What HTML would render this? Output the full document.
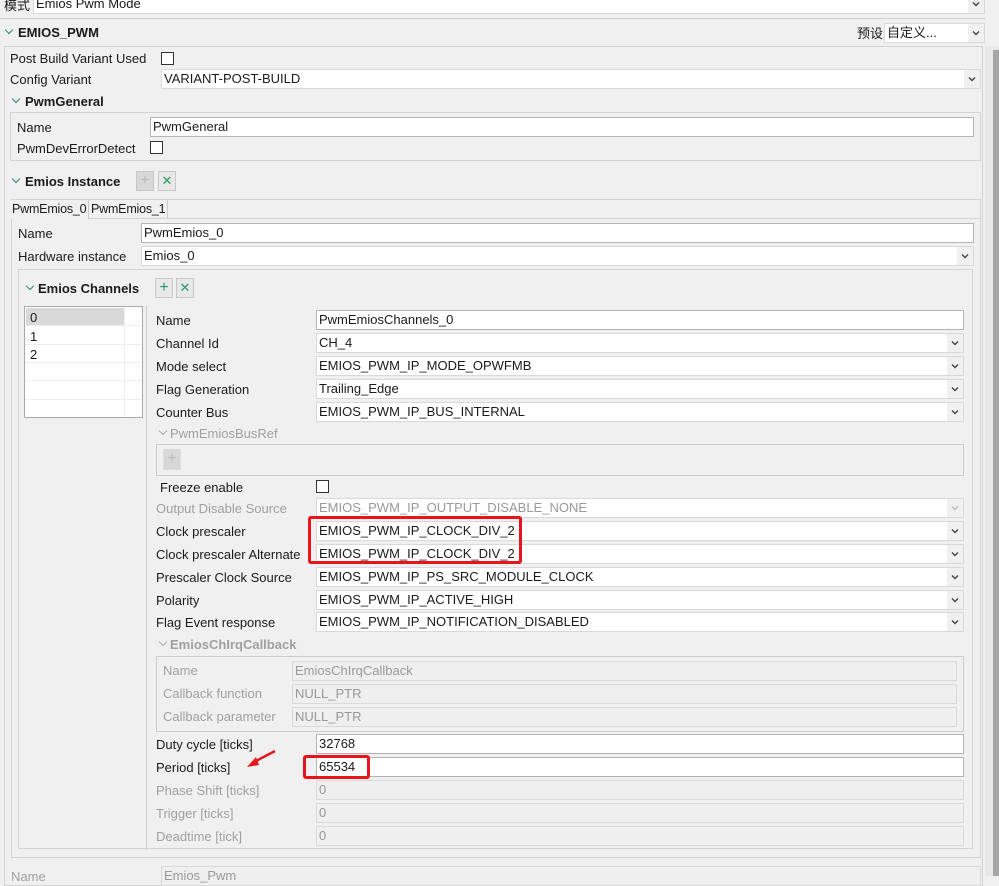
<!DOCTYPE html>
<html><head><meta charset="utf-8"><style>
*{box-sizing:border-box;margin:0;padding:0}
body{width:999px;height:876px;overflow:hidden;background:#f0f0f0;font-family:"Liberation Sans","Noto Sans CJK SC",sans-serif;font-size:13px;color:#1a1a1a;position:relative}
.a{position:absolute;white-space:nowrap}
.l{position:absolute;white-space:nowrap;line-height:16px;margin-top:1px}
.g{color:#a0a0a0}
.b{font-weight:bold}
.in{position:absolute;background:#fff;border:1px solid #b4b4b4;height:20px;line-height:18px;padding-left:2px;white-space:nowrap;overflow:hidden}
.dis{background:#efefef;border-color:#dadada;color:#999}
.cb{position:absolute;background:#fff;border:1px solid #d9d9d9;height:20px;line-height:18px;padding-left:2px;white-space:nowrap;overflow:hidden}
.cb:after{content:"";position:absolute;right:0;top:0;width:16px;height:18px;background:#f0f0f0}
.ar{position:absolute;right:4px;top:5px;width:8px;height:8px;z-index:2}
.chk{position:absolute;width:13px;height:13px;background:#fff;border:1px solid #333}
.box{position:absolute;border:1px solid #d4d4d4}
.chev{position:absolute;width:6px;height:6px;border-right:1.5px solid #2a8a7a;border-bottom:1.5px solid #2a8a7a;transform:rotate(45deg)}
.chev.g2{border-color:#aaa}
.btn{position:absolute;width:18px;height:20px;border:1px solid #c8c8c8;background:#e8e8e8;color:#2a9a6a;text-align:center;line-height:18px;font-size:16px}
.red{position:absolute;border:3px solid #e8141b;border-radius:3px}
</style></head><body>
<svg width="0" height="0" style="position:absolute"><defs><symbol id="dn" viewBox="0 0 8 8"><path d="M1 2.5 L4 5.5 L7 2.5" fill="none" stroke="#444" stroke-width="1.4"/></symbol></defs></svg>

<div class="l" style="left:4px;top:-3px">模式</div>
<div class="cb" style="left:33px;top:-6px;width:952px">Emios Pwm Mode<svg class="ar" style="top:5px"><use href="#dn"/></svg></div>
<div class="a" style="left:0;top:18px;width:985px;height:1px;background:#d0d0d0"></div>

<div class="chev" style="left:6px;top:27px"></div>
<div class="l b" style="left:18px;top:24px">EMIOS_PWM</div>
<div class="l" style="left:857px;top:25px">预设</div>
<div class="cb" style="left:884px;top:23px;width:101px">自定义...<svg class="ar"><use href="#dn"/></svg></div>

<div class="a" style="left:985px;top:46px;width:14px;height:830px;background:#e8e8e8"></div>
<div class="a" style="left:993px;top:50px;width:6px;height:826px;background:#a6a6a6"></div>

<div class="box" style="left:4px;top:46px;width:979px;height:840px"></div>
<div class="l" style="left:10px;top:50px">Post Build Variant Used</div>
<div class="chk" style="left:161px;top:52px"></div>
<div class="l" style="left:10px;top:71px">Config Variant</div>
<div class="cb" style="left:161px;top:69px;width:820px">VARIANT-POST-BUILD<svg class="ar"><use href="#dn"/></svg></div>

<div class="chev" style="left:13px;top:96px"></div>
<div class="l b" style="left:25px;top:93px">PwmGeneral</div>
<div class="box" style="left:10px;top:112px;width:971px;height:49px"></div>
<div class="l" style="left:17px;top:119px">Name</div>
<div class="in" style="left:150px;top:117px;width:824px">PwmGeneral</div>
<div class="l" style="left:17px;top:140px">PwmDevErrorDetect</div>
<div class="chk" style="left:150px;top:141px"></div>

<div class="chev" style="left:13px;top:176px"></div>
<div class="l b" style="left:25px;top:173px">Emios Instance</div>
<div class="btn" style="left:136px;top:171px;background:#d8d8d8;color:#bbb">+</div>
<div class="btn" style="left:158px;top:171px;font-size:13px">✕</div>

<div class="box" style="left:11px;top:218px;width:970px;height:640px"></div>
<div class="a" style="left:11px;top:199px;width:970px;height:20px;border:1px solid #d4d4d4;border-bottom:none"></div>
<div class="a" style="left:11px;top:200px;width:78px;height:19px;border-right:1px solid #ccc;background:#f0f0f0;line-height:18px;padding-left:1px;font-size:12.5px;letter-spacing:-0.2px">PwmEmios_0</div>
<div class="a" style="left:89px;top:200px;width:79px;height:18px;border-right:1px solid #ccc;background:#f0f0f0;line-height:18px;padding-left:2px;font-size:12.5px;letter-spacing:-0.2px">PwmEmios_1</div>
<div class="l" style="left:18px;top:225px">Name</div>
<div class="in" style="left:141px;top:223px;width:833px">PwmEmios_0</div>
<div class="l" style="left:18px;top:248px">Hardware instance</div>
<div class="cb" style="left:141px;top:246px;width:833px">Emios_0<svg class="ar"><use href="#dn"/></svg></div>

<div class="box" style="left:18px;top:269px;width:955px;height:580px"></div>
<div class="chev" style="left:27px;top:283px"></div>
<div class="l b" style="left:38px;top:280px">Emios Channels</div>
<div class="btn" style="left:155px;top:278px">+</div>
<div class="btn" style="left:176px;top:278px;font-size:13px">✕</div>

<div class="a" style="left:24px;top:306px;width:119px;height:112px;background:#fff;border:1px solid #aaa">
<div class="a" style="left:1px;top:1px;width:99px;height:17px;background:#d9d9d9"></div>
<div class="a" style="left:99px;top:0;width:1px;height:110px;background:#eee"></div>
<div class="a" style="left:0;top:18px;width:117px;height:1px;background:#eee"></div>
<div class="a" style="left:0;top:37px;width:117px;height:1px;background:#eee"></div>
<div class="a" style="left:0;top:55px;width:117px;height:1px;background:#eee"></div>
<div class="a" style="left:0;top:73px;width:117px;height:1px;background:#eee"></div>
<div class="a" style="left:0;top:92px;width:117px;height:1px;background:#eee"></div>
<div class="l" style="left:5px;top:2px">0</div>
<div class="l" style="left:5px;top:21px">1</div>
<div class="l" style="left:5px;top:39px">2</div>
</div>
<div class="a" style="left:146px;top:305px;width:1px;height:545px;background:#cfcfcf"></div>

<div class="l" style="left:156px;top:312px">Name</div>
<div class="in" style="left:316px;top:310px;width:648px">PwmEmiosChannels_0</div>
<div class="l" style="left:156px;top:335px">Channel Id</div>
<div class="cb" style="left:316px;top:333px;width:648px">CH_4<svg class="ar"><use href="#dn"/></svg></div>
<div class="l" style="left:156px;top:358px">Mode select</div>
<div class="cb" style="left:316px;top:356px;width:648px">EMIOS_PWM_IP_MODE_OPWFMB<svg class="ar"><use href="#dn"/></svg></div>
<div class="l" style="left:156px;top:381px">Flag Generation</div>
<div class="cb" style="left:316px;top:379px;width:648px">Trailing_Edge<svg class="ar"><use href="#dn"/></svg></div>
<div class="l" style="left:156px;top:404px">Counter Bus</div>
<div class="cb" style="left:316px;top:402px;width:648px">EMIOS_PWM_IP_BUS_INTERNAL<svg class="ar"><use href="#dn"/></svg></div>

<div class="chev g2" style="left:160px;top:428px"></div>
<div class="l g" style="left:170px;top:425px">PwmEmiosBusRef</div>
<div class="box" style="left:156px;top:444px;width:808px;height:32px;border-color:#ccc"></div>
<div class="btn" style="left:163px;top:449px;height:21px;background:#d8d8d8;color:#bbb;border-color:#ddd">+</div>

<div class="l" style="left:160px;top:479px">Freeze enable</div>
<div class="chk" style="left:316px;top:480px"></div>
<div class="l g" style="left:156px;top:500px">Output Disable Source</div>
<div class="cb dis" style="left:316px;top:498px;width:648px">EMIOS_PWM_IP_OUTPUT_DISABLE_NONE<svg class="ar"><path d="M1 2.5 L4 5.5 L7 2.5" fill="none" stroke="#bbb" stroke-width="1.4"/></svg></div>
<div class="l" style="left:156px;top:523px">Clock prescaler</div>
<div class="cb" style="left:316px;top:521px;width:648px">EMIOS_PWM_IP_CLOCK_DIV_2<svg class="ar"><use href="#dn"/></svg></div>
<div class="l" style="left:156px;top:546px">Clock prescaler Alternate</div>
<div class="cb" style="left:316px;top:544px;width:648px">EMIOS_PWM_IP_CLOCK_DIV_2<svg class="ar"><use href="#dn"/></svg></div>
<div class="red" style="left:308px;top:516px;width:214px;height:48px"></div>
<div class="l" style="left:156px;top:569px">Prescaler Clock Source</div>
<div class="cb" style="left:316px;top:567px;width:648px">EMIOS_PWM_IP_PS_SRC_MODULE_CLOCK<svg class="ar"><use href="#dn"/></svg></div>
<div class="l" style="left:156px;top:592px">Polarity</div>
<div class="cb" style="left:316px;top:590px;width:648px">EMIOS_PWM_IP_ACTIVE_HIGH<svg class="ar"><use href="#dn"/></svg></div>
<div class="l" style="left:156px;top:614px">Flag Event response</div>
<div class="cb" style="left:316px;top:612px;width:648px">EMIOS_PWM_IP_NOTIFICATION_DISABLED<svg class="ar"><use href="#dn"/></svg></div>

<div class="chev g2" style="left:160px;top:639px"></div>
<div class="l g b" style="left:170px;top:636px">EmiosChIrqCallback</div>
<div class="box" style="left:156px;top:656px;width:808px;height:76px;border-color:#ccc"></div>
<div class="l g" style="left:163px;top:662px">Name</div>
<div class="in dis" style="left:292px;top:661px;width:665px">EmiosChIrqCallback</div>
<div class="l g" style="left:163px;top:685px">Callback function</div>
<div class="in dis" style="left:292px;top:684px;width:665px">NULL_PTR</div>
<div class="l g" style="left:163px;top:708px">Callback parameter</div>
<div class="in dis" style="left:292px;top:707px;width:665px">NULL_PTR</div>

<div class="l" style="left:156px;top:736px">Duty cycle [ticks]</div>
<div class="in" style="left:316px;top:734px;width:648px">32768</div>
<div class="l" style="left:156px;top:759px">Period [ticks]</div>
<div class="in" style="left:316px;top:757px;width:648px">65534</div>
<div class="red" style="left:303px;top:755px;width:67px;height:24px"></div>
<svg class="a" style="left:240px;top:745px" width="40" height="30"><path d="M35 6 L14 17" stroke="#e8141b" stroke-width="2.5" fill="none"/><path d="M7 22 L16 12 L19 20 Z" fill="#e8141b"/></svg>
<div class="l g" style="left:156px;top:782px">Phase Shift [ticks]</div>
<div class="in dis" style="left:316px;top:780px;width:648px">0</div>
<div class="l g" style="left:156px;top:805px">Trigger [ticks]</div>
<div class="in dis" style="left:316px;top:803px;width:648px">0</div>
<div class="l g" style="left:156px;top:828px">Deadtime [tick]</div>
<div class="in dis" style="left:316px;top:826px;width:648px">0</div>

<div class="l g" style="left:11px;top:868px">Name</div>
<div class="in dis" style="left:161px;top:866px;width:820px">Emios_Pwm</div>
</body></html>
